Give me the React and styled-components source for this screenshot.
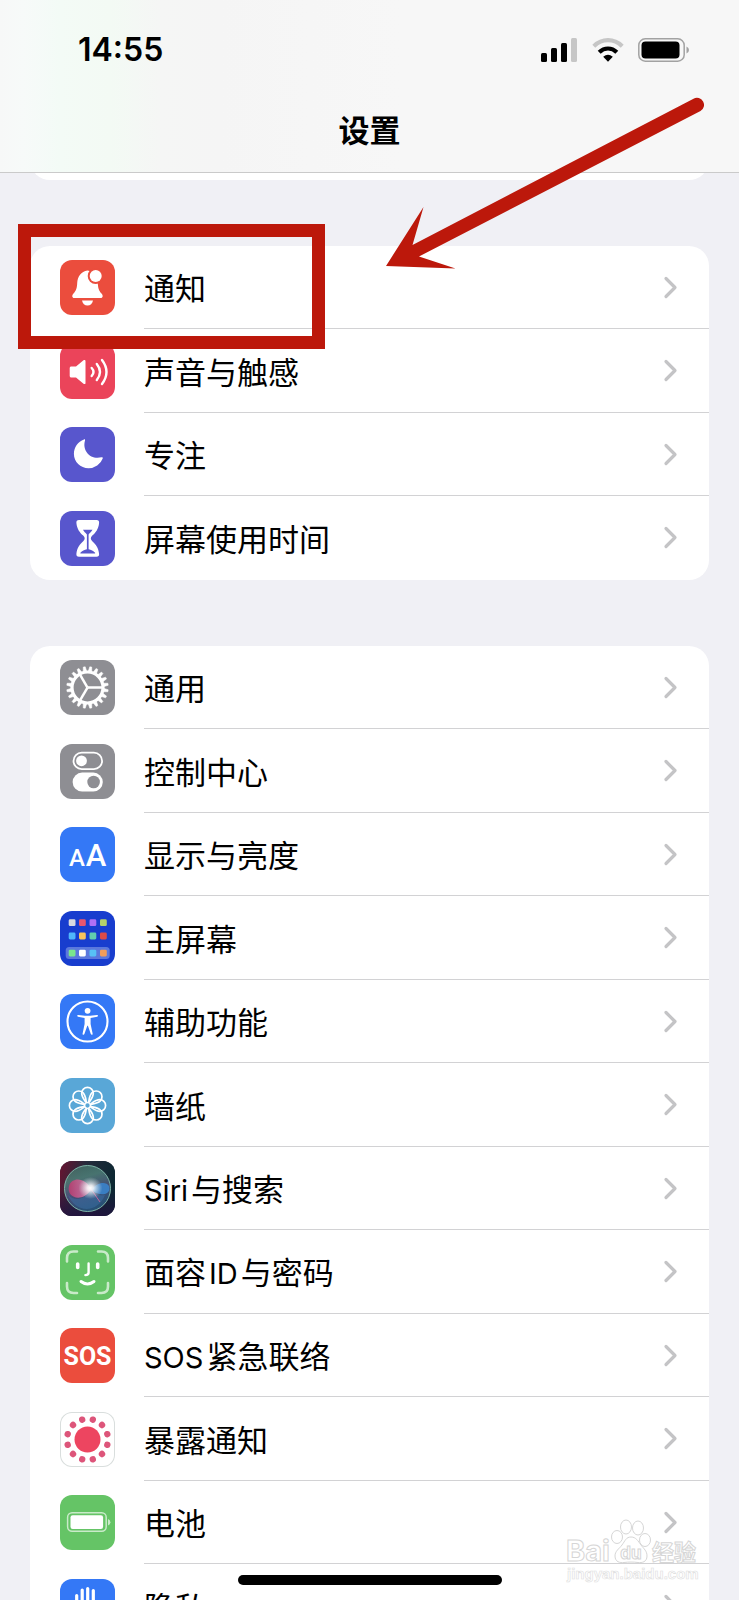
import React from "react";
import styled, { createGlobalStyle } from "styled-components";

const sans = `Inter, "Noto Sans CJK SC", sans-serif`;

const GlobalStyle = createGlobalStyle`
  * { box-sizing: border-box; }
  body { margin: 0; background: #f0f0f5; font-family: ${sans}; color: #000; }
`;

const Screen = styled.div`
  position: relative;
  display: flex;
  flex-direction: column;
  height: 100vh;
  overflow: hidden;
  background: #f0f0f5;
`;

const Header = styled.header`
  flex: none;
  border-bottom: 1px solid #cacaca;
  padding-bottom: 9px;
  background: linear-gradient(
    90deg,
    #f7f8f8 0,
    #f7faf9 24px,
    #f3fbf6 60px,
    #f3faf4 110px,
    #f5f6f5 160px,
    #f5f5f5 220px,
    #f7f7f7 400px
  );
`;

const StatusBar = styled.div`
  display: flex;
  align-items: center;
  justify-content: space-between;
  height: 99px;
  padding: 0 49px 0 78px;
`;

const Clock = styled.time`
  font-size: 32px;
  line-height: 40px;
  font-weight: 600;
`;

const StatusIcons = styled.div`
  display: flex;
  align-items: center;
  gap: 14px;
`;

const Title = styled.h1`
  margin: 0;
  font-size: 31px;
  line-height: 64px;
  font-weight: 700;
  text-align: center;
`;

const Main = styled.main`
  flex: 1;
  min-height: 0;
  overflow: hidden;
  display: flex;
  flex-direction: column;
  gap: 66px;
  padding: 0 30px;
`;

const Group = styled.ul`
  flex: none;
  list-style: none;
  margin: 0;
  padding: 0;
  border-radius: 20px;
  background: #fff;
`;

const ScrolledGroup = styled.div`
  flex: none;
  height: 60px;
  margin-top: -53px;
  border-radius: 20px;
  background: #fff;
`;

const Item = styled.li`
  position: relative;
  height: 83px;
  &:nth-child(even) { height: 84px; }
`;

const RowLink = styled.a`
  display: flex;
  align-items: center;
  gap: 29px;
  height: 100%;
  padding-left: 30px;
  color: inherit;
  text-decoration: none;
`;

const Tile = styled.svg`
  flex: none;
  width: 55px;
  height: 55px;
  border-radius: 12px;
  background: ${(p) => p.$color};
  box-shadow: ${(p) => (p.$outlined ? "inset 0 0 0 1px #d9dedd" : "none")};
`;

const RowBody = styled.span`
  flex: 1;
  align-self: stretch;
  display: flex;
  align-items: center;
  justify-content: space-between;
  padding-right: 31px;
  border-bottom: 1px solid ${(p) => (p.$last ? "transparent" : "#d2d2d4")};
`;

const Label = styled.span`
  display: inline-flex;
  align-items: baseline;
  gap: 3px;
  padding-top: 4px;
  font-size: 31px;
  line-height: 44px;
  white-space: nowrap;
`;

const Latin = styled.span`
  font-size: 29px;
`;

const HighlightFrame = styled.span`
  position: absolute;
  z-index: 2;
  left: -12px;
  top: -22px;
  width: 307px;
  height: 125px;
  border: 13px solid #bc180b;
  pointer-events: none;
`;

const Arrow = styled.svg`
  position: absolute;
  z-index: 3;
  left: 386px;
  top: 96px;
  pointer-events: none;
`;

const HomeIndicator = styled.div`
  position: absolute;
  left: 50%;
  bottom: 15px;
  width: 264px;
  height: 10px;
  transform: translateX(-50%);
  border-radius: 5px;
  background: #000;
`;

const Watermark = styled.svg`
  position: absolute;
  right: 38px;
  bottom: 12px;
  pointer-events: none;
`;

const around = (n, offset = 0) => Array.from({ length: n }, (_, i) => offset + (i * 360) / n);

const Bell = () => (
  <g fill="#fff">
    <path d="M27.5 10.5c-6.500 1-10 6-10.300 12.500-.2 5-1 7.500-3.700 10.500-1.800 2-1.600 4.500.8 4.500h26.400c2.400 0 2.600-2.500.8-4.500-2.700-3-3.500-5.500-3.700-10.500-.1-6.500-4-11.500-10.300-12.500z" />
    <path d="M22 40.500h11c-.5 3-2.700 5-5.500 5s-5-2-5.500-5z" />
    <circle cx="35.700" cy="16" r="8" fill="#eb4d3d" />
    <circle cx="35.700" cy="16" r="6" />
  </g>
);

const Speaker = () => (
  <g fill="none" stroke="#fff" strokeWidth="2.400" strokeLinecap="round">
    <path d="M11.500 22.500h4.500l7.500-6.200c1-.8 2-.4 2 .8v21.800c0 1.200-1 1.600-2 .8L16 33.500h-4.500c-1.200 0-1.800-.6-1.800-1.800v-7.400c0-1.200.6-1.800 1.800-1.800z" fill="#fff" stroke="none" />
    <path d="M31.700 24q3.600 4 0 8" />
    <path d="M36.800 20q6.400 8 0 16" />
    <path d="M42 16q9 12 0 24" />
  </g>
);

const Moon = () => (
  <path
    d="M24 12.400c.8-.3 1.300.3 1 1-3 10.500 5.500 19.500 16.500 16.800.9-.2 1.500.4 1.200 1.200A15 15 0 0 1 28.600 41.200c-8.200 0-14.700-6.400-14.700-14.500 0-6.500 4-12 10.100-14.300z"
    fill="#fff"
  />
);

const Hourglass = () => (
  <g fill="#fff">
    <path d="M19 9h17.500c2 0 2.800 1.200 2.600 3-.6 6-3.300 9.500-6.800 12.600-2 1.800-2 3.800 0 5.600 3.500 3.100 6.200 6.600 6.800 12.600.2 1.800-.6 3-2.600 3H19c-2 0-2.800-1.200-2.600-3 .6-6 3.300-9.500 6.800-12.600 2-1.800 2-3.800 0-5.600-3.500-3.100-6.200-6.600-6.800-12.600-.2-1.800.6-3 2.600-3z" />
    <path d="M23 18.800h9.500c-.8 2-2.800 3-3.900 4.600v14.800c2.400.8 4.900 1.500 6.500 3.500.3.500 0 .8-.5.800H20.900c-.5 0-.8-.3-.5-.8 1.600-2 4.200-2.700 6.500-3.500V23.400c-1.200-1.600-3.100-2.600-3.900-4.600z" fill="#5856cd" />
  </g>
);

const Gear = () => (
  <g fill="none" stroke="#fff" transform="translate(27.500 27.500)">
    <circle r="15.500" strokeWidth="3.200" />
    {around(20, 9).map((a) => (
      <path key={a} d="M-1.700-16.500h3.400L1-20.800H-1z" fill="#fff" strokeWidth=".5" transform={`rotate(${a})`} />
    ))}
    {[90, 210, 330].map((a) => (
      <path key={a} d="M0 0V-15" strokeWidth="2.500" transform={`rotate(${a})`} />
    ))}
  </g>
);

const Switches = () => (
  <g>
    <rect x="13.500" y="8.700" width="28.600" height="16.400" rx="8.200" fill="none" stroke="#fff" strokeWidth="1.800" />
    <circle cx="21.500" cy="16.800" r="5.400" fill="#fff" />
    <rect x="12.600" y="28.600" width="30.200" height="19" rx="9.500" fill="#fff" />
    <circle cx="33.600" cy="38" r="6.300" fill="#8e8e93" />
  </g>
);

const LetterSizes = () => (
  <g fill="#fff" fontFamily="Roboto, sans-serif" fontWeight="500" textAnchor="middle">
    <text x="17" y="39" fontSize="24">A</text>
    <text x="36" y="39" fontSize="31">A</text>
  </g>
);

const appColors = [
  ["#d9dae0", "#e8566f", "#b070f5", "#b4d16b"],
  ["#50b7fb", "#f7c35c", "#63cfae", "#dc4b48"],
  ["#7ae88c", "#ffffff", "#57c1f6", "#f19d5a"],
];
const AppGrid = () => (
  <g>
    <rect x="5.700" y="36" width="44" height="12" rx="3.500" fill="#5b78dd" />
    {appColors.map((row, r) =>
      row.map((c, i) => (
        <rect key={c} x={[8.7, 19, 29.5, 40][i]} y={[8.3, 21.6, 38.700][r]} width="6.800" height="6.800" rx="1.400" fill={c} />
      ))
    )}
  </g>
);

const Person = () => (
  <g fill="#fff">
    <circle cx="27.500" cy="27.500" r="20" fill="none" stroke="#fff" strokeWidth="2.100" />
    <circle cx="27.600" cy="16.800" r="2.900" />
    <path d="M18.200 21.100l6.800.7h5.200l6.800-.7c1.200-.1 1.400 1.300.2 1.600l-6.600 1.200v6.200l2 9.500c.3 1.300-1.300 1.700-1.800.5l-2.900-8.300h-.6l-2.900 8.300c-.5 1.200-2.100.8-1.800-.5l2-9.500v-6.200L18 22.700c-1.200-.3-1-1.700.2-1.600z" />
  </g>
);

const Flower = () => (
  <g fill="none" stroke="#fff" strokeWidth="1.700" transform="translate(27.500 27.500)">
    <circle r="3" />
    {around(8).map((a) => (
      <path key={a} d="M-1.500-3.200C-3.500-6-5.800-8.500-5.800-12.300a5.800 5.800 0 0 1 11.600 0C5.800-8.500 3.500-6 1.500-3.200" transform={`rotate(${a})`} />
    ))}
  </g>
);

const SiriOrb = () => (
  <g>
    <defs>
      <linearGradient id="siri-bg" x1="0" y1="0" x2="1" y2="0.300">
        <stop offset="0" stopColor="#6b1230" />
        <stop offset=".45" stopColor="#252b3c" />
        <stop offset="1" stopColor="#0c2832" />
      </linearGradient>
      <linearGradient id="siri-low" x1="0" y1="0" x2="0" y2="1">
        <stop offset=".5" stopColor="#241040" stopOpacity="0" />
        <stop offset="1" stopColor="#241040" stopOpacity=".8" />
      </linearGradient>
      <linearGradient id="siri-orb" x1="0" y1="0" x2=".3" y2="1">
        <stop offset="0" stopColor="#3f6a62" />
        <stop offset=".35" stopColor="#4f8079" />
        <stop offset=".65" stopColor="#4d5580" />
        <stop offset="1" stopColor="#2a5a80" />
      </linearGradient>
      <linearGradient id="siri-pink" x1="0" y1="0" x2="1" y2="0">
        <stop offset="0" stopColor="#c23a70" />
        <stop offset="1" stopColor="#d887b4" />
      </linearGradient>
      <radialGradient id="siri-glow">
        <stop offset="0" stopColor="#fff" />
        <stop offset=".25" stopColor="#fff" stopOpacity=".85" />
        <stop offset="1" stopColor="#d5eaea" stopOpacity="0" />
      </radialGradient>
    </defs>
    <rect width="55" height="55" fill="url(#siri-bg)" />
    <rect width="55" height="55" fill="url(#siri-low)" />
    <circle cx="27.500" cy="27.500" r="23" fill="url(#siri-orb)" fillOpacity=".85" stroke="#7fb5a8" strokeWidth="1" />
    <path d="M31 29C27 17 12 15 9 25c-3 12 13 17 22 4z" fill="url(#siri-pink)" fillOpacity=".85" />
    <path d="M31 29c6-8 15-9 18-4 3 8-8 12-18 4z" fill="#3a86d0" fillOpacity=".85" />
    <path d="M8 34c8 8 18 3 23-5 4 5 9 6 14 5C38 52 16 53 8 34z" fill="#3b6fa6" fillOpacity=".5" />
    <path d="M31 28l9 13" stroke="#c2649a" strokeWidth="1" />
    <ellipse cx="30.500" cy="27" rx="12" ry="11" fill="url(#siri-glow)" />
  </g>
);

const Face = () => (
  <g fill="none" stroke="#fff" strokeWidth="3" strokeLinecap="round">
    <g strokeOpacity=".65" strokeWidth="2.600">
      <path d="M7 16.500V13q0-6.500 6.500-6.500H17M38 6.500h3.500Q48 6.500 48 13v3.500M48 38v3.500q0 6.500-6.500 6.500H38M17 48h-3.500Q7 48 7 41.500V38" />
    </g>
    <path d="M17.700 19v3.500M37.700 19v3.500" strokeWidth="3.600" />
    <path d="M28.600 18.500v9q0 2.600-3.200 2.600" strokeWidth="2.400" />
    <path d="M21 36.500q6.500 5 13 0" />
  </g>
);

const Sos = () => (
  <text x="27.500" y="37" fill="#fff" fontFamily="Roboto, sans-serif" fontWeight="700" fontSize="25" textAnchor="middle">
    SOS
  </text>
);

const Exposure = () => (
  <g fill="#ed4560" transform="translate(27.500 27.500)">
    <circle r="13" />
    {around(12, 15).map((a) => (
      <circle key={a} cy="-20.500" r="3.200" fill="#dd557a" transform={`rotate(${a})`} />
    ))}
  </g>
);

const BatteryLevel = () => (
  <g>
    <rect x="7.600" y="17.700" width="38.600" height="18.600" rx="4.500" fill="none" stroke="#fff" strokeOpacity=".65" strokeWidth="1.500" />
    <rect x="10.500" y="20.300" width="32.600" height="13.600" rx="2.200" fill="#fff" />
    <path d="M48 24v6.500q2.400-1 2.400-3.200T48 24z" fill="#fff" fillOpacity=".65" />
  </g>
);

const Hand = () => (
  <g fill="none" stroke="#fff" strokeWidth="3.200" strokeLinecap="round">
    <path d="M16.700 16.500V34M22.200 11v18M27.700 9.500V28M33.300 11.500V30" />
    <path d="M15.100 28h20v6l3.500-4q3-2.500 4 0L36 42q-3 5.500-9 5.500-11.900 0-11.900-12z" fill="#fff" stroke="none" />
  </g>
);

const alerts = [
  { id: "notifications", label: ["通知"], color: "#eb4d3d", Art: Bell, highlighted: true },
  { id: "sounds", label: ["声音与触感"], color: "#eb445a", Art: Speaker },
  { id: "focus", label: ["专注"], color: "#5856cd", Art: Moon },
  { id: "screen-time", label: ["屏幕使用时间"], color: "#5856cd", Art: Hourglass },
];

const device = [
  { id: "general", label: ["通用"], color: "#8e8e93", Art: Gear },
  { id: "control-center", label: ["控制中心"], color: "#8e8e93", Art: Switches },
  { id: "display", label: ["显示与亮度"], color: "#3478f6", Art: LetterSizes },
  { id: "home-screen", label: ["主屏幕"], color: "#183dce", Art: AppGrid },
  { id: "accessibility", label: ["辅助功能"], color: "#3478f6", Art: Person },
  { id: "wallpaper", label: ["墙纸"], color: "#59a7d7", Art: Flower },
  { id: "siri", label: ["Siri", "与搜索"], color: "#252b3c", Art: SiriOrb },
  { id: "face-id", label: ["面容", "ID", "与密码"], color: "#65c466", Art: Face },
  { id: "sos", label: ["SOS", "紧急联络"], color: "#eb4d3d", Art: Sos },
  { id: "exposure", label: ["暴露通知"], color: "#ffffff", Art: Exposure, outlined: true },
  { id: "battery", label: ["电池"], color: "#65c466", Art: BatteryLevel },
  { id: "privacy", label: ["隐私"], color: "#3478f6", Art: Hand },
];

const Chevron = () => (
  <svg width="15" height="23" viewBox="0 0 15 23" fill="none" aria-hidden="true">
    <path d="M3 2.500l9 9-9 9" stroke="#c4c4c6" strokeWidth="3.200" strokeLinecap="round" strokeLinejoin="round" />
  </svg>
);

function SettingsGroup({ items }) {
  return (
    <Group>
      {items.map(({ id, label, color, Art, outlined, highlighted }, i) => (
        <Item key={id}>
          <RowLink href={`#${id}`}>
            <Tile viewBox="0 0 55 55" $color={color} $outlined={outlined} aria-hidden="true">
              <Art />
            </Tile>
            <RowBody $last={i === items.length - 1}>
              <Label>
                {label.map((part) =>
                  /^[A-Za-z]/.test(part) ? <Latin key={part}>{part}</Latin> : <span key={part}>{part}</span>
                )}
              </Label>
              <Chevron />
            </RowBody>
          </RowLink>
          {highlighted && <HighlightFrame />}
        </Item>
      ))}
    </Group>
  );
}

const Signal = () => (
  <svg width="37" height="24" viewBox="0 0 37 24" aria-hidden="true">
    <rect y="15" width="6" height="9" rx="1.500" />
    <rect x="10" y="10" width="6" height="14" rx="1.500" />
    <rect x="20" y="5" width="6" height="19" rx="1.500" />
    <rect x="30" width="6" height="24" rx="1.500" fill="#c6c6c6" />
  </svg>
);

const Wifi = () => (
  <svg width="32" height="24" viewBox="0 0 32 24" fill="none" strokeWidth="4.200" aria-hidden="true">
    <path d="M1.800 8.200Q8 2.200 16 2.200t14.200 6" stroke="#c6c6c6" />
    <path d="M7.200 14.200Q11 10.500 16 10.500t8.800 3.700" stroke="#000" />
    <path d="M11.200 18.800Q16 14.600 20.800 18.800L16 23.800z" fill="#000" />
  </svg>
);

const Battery = () => (
  <svg width="52" height="24" viewBox="0 0 52 24" aria-hidden="true">
    <rect x=".8" y=".8" width="45.400" height="22.400" rx="6.500" fill="none" stroke="#a2a2a2" strokeWidth="1.500" />
    <rect x="3.500" y="3.500" width="38" height="17" rx="4" />
    <path d="M48.500 8.500v7q2.500-1 2.500-3.500t-2.500-3.500z" fill="#a2a2a2" />
  </svg>
);

export default function App() {
  return (
    <Screen>
      <GlobalStyle />
      <Header>
        <StatusBar>
          <Clock>14:55</Clock>
          <StatusIcons>
            <Signal />
            <Wifi />
            <Battery />
          </StatusIcons>
        </StatusBar>
        <Title>设置</Title>
      </Header>
      <Main>
        <ScrolledGroup />
        <SettingsGroup items={alerts} />
        <SettingsGroup items={device} />
      </Main>
      <Arrow width="320" height="176" viewBox="0 0 320 176" aria-hidden="true">
        <path d="M0 170L37.500 111 26.500 149 307.500 2.800A6.800 6.800 0 0 1 314.500 15L33 160.500 69.500 172.500z" fill="#bc180b" />
      </Arrow>
      <Watermark width="136" height="70" viewBox="0 0 136 70" fill="#fff" stroke="#d6d6d6" strokeWidth="1" fontWeight="700">
        <text x="1" y="43" fontFamily="Inter, sans-serif" fontSize="29">Bai</text>
        <ellipse cx="52" cy="19" rx="5.500" ry="6.500" />
        <ellipse cx="61" cy="9" rx="5.500" ry="7" />
        <ellipse cx="73" cy="10" rx="5.500" ry="7" />
        <ellipse cx="80" cy="22" rx="5.500" ry="6.500" />
        <path d="M66 19c5 0 7 4 10 8s6 6 6 11c0 6-5 7-9 6.500-5-.6-9-.6-14 0-4 .5-9-.5-9-6.500 0-5 4-7 7-11s4-8 9-8z" />
        <text x="66" y="41" fontFamily="Inter, sans-serif" fontSize="17" textAnchor="middle">du</text>
        <text x="87" y="42" fontFamily='"Noto Sans CJK SC", sans-serif' fontSize="22">经验</text>
        <text x="2" y="61" fontFamily='"Liberation Sans", sans-serif' fontSize="15" strokeWidth=".6" stroke="#dedede">jingyan.baidu.com</text>
      </Watermark>
      <HomeIndicator />
    </Screen>
  );
}
